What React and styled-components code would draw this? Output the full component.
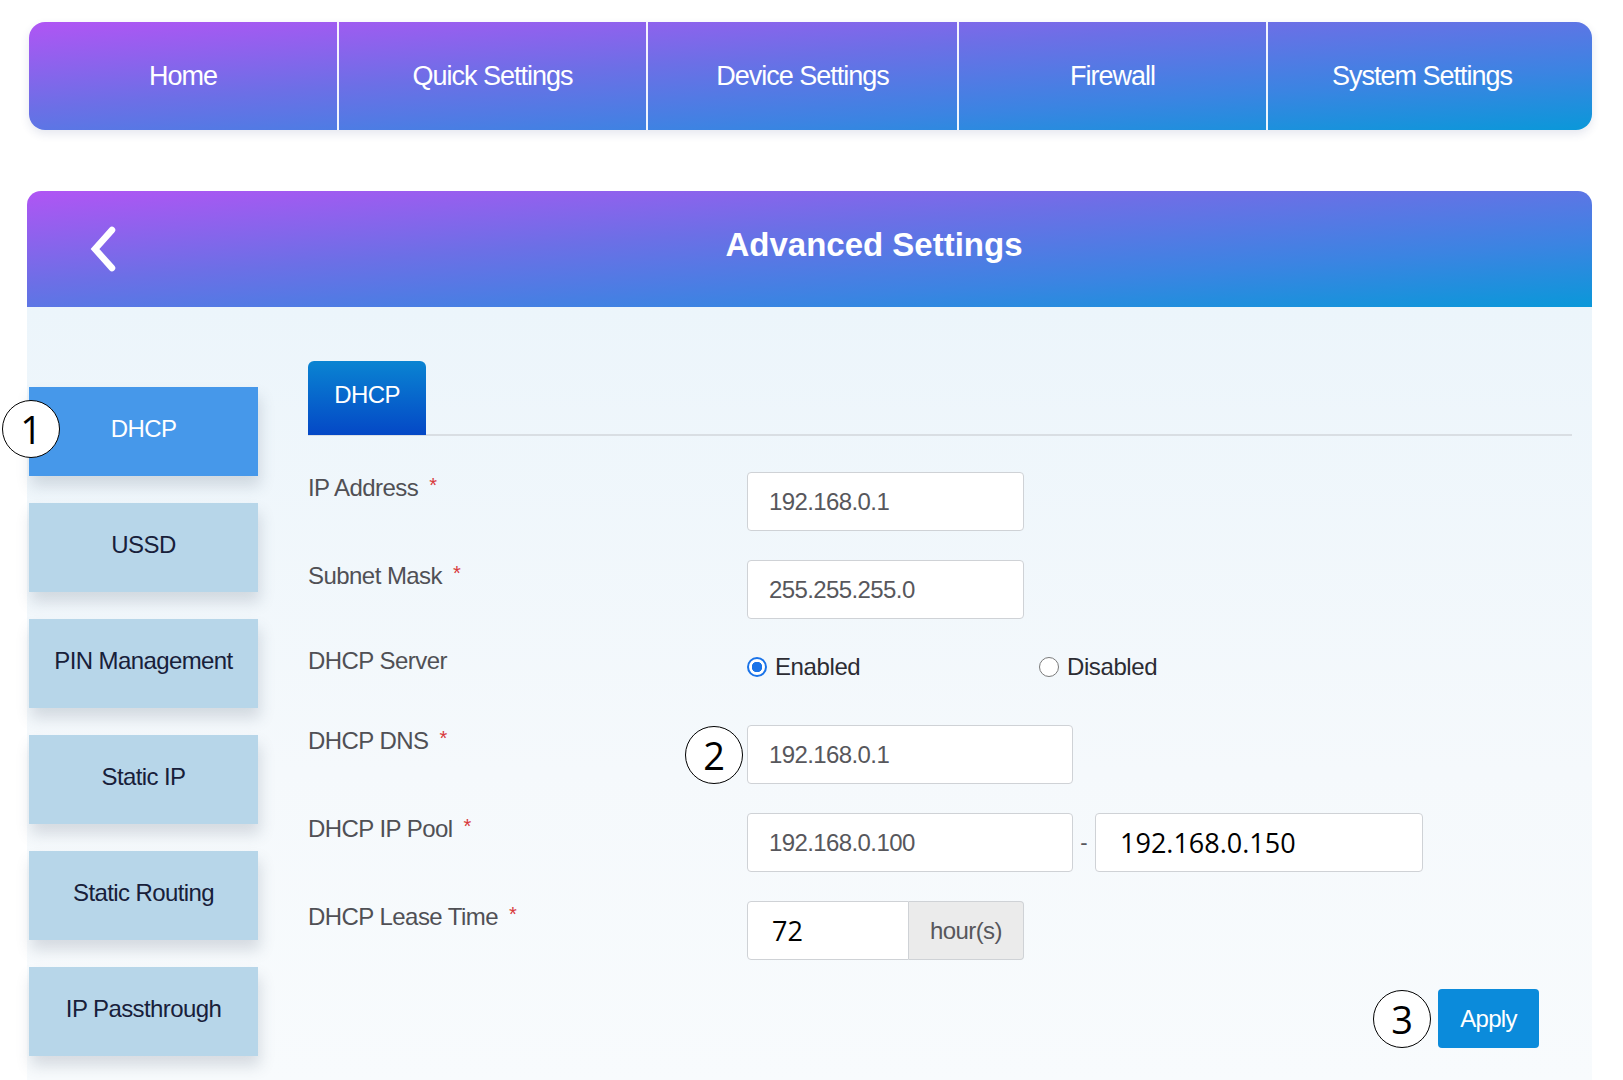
import React from "react";
import styled, { createGlobalStyle } from "styled-components";

const GlobalStyle = createGlobalStyle`
  body {
    margin: 0;
    background: #ffffff;
    font-family: "Liberation Sans", Arial, sans-serif;
  }
`;

const brandGradient = "linear-gradient(to bottom right, #b055f4 0%, #6c6fe6 40%, #3b84e2 72%, #0a98d9 100%)";

const navItems = ["Home", "Quick Settings", "Device Settings", "Firewall", "System Settings"];
const sideItems = ["DHCP", "USSD", "PIN Management", "Static IP", "Static Routing", "IP Passthrough"];

const Page = styled.div`
  padding: 22px 31px 0 27px;
`;

const TopNav = styled.nav`
  margin-left: 2px;
  height: 108px;
  display: grid;
  grid-template-columns: 308px 309px 311px 309px 1fr;
  padding-right: 16px;
  background: ${brandGradient};
  border-radius: 16px;
  overflow: hidden;
  box-shadow: 0 4px 10px rgba(40, 60, 120, 0.12);
`;

const NavItem = styled.div`
  display: flex;
  align-items: center;
  justify-content: center;
  color: #ffffff;
  font-size: 27px;
  letter-spacing: -1px;
  border-left: ${(p) => (p.$first ? "none" : "2px solid rgba(255, 255, 255, 0.92)")};
`;

const Panel = styled.section`
  margin-top: 61px;
`;

const PanelHeader = styled.header`
  height: 116px;
  display: flex;
  align-items: center;
  background: ${brandGradient};
  border-radius: 14px 14px 0 0;
`;

const BackButton = styled.div`
  width: 129px;
  display: flex;
  align-items: center;
  padding-left: 61px;
  box-sizing: border-box;
`;

const Title = styled.h1`
  flex: 1;
  margin: 0;
  text-align: center;
  color: #ffffff;
  font-size: 33px;
  font-weight: bold;
  letter-spacing: 0;
  padding-bottom: 8px;
`;

const PanelBody = styled.div`
  display: flex;
  padding: 54px 20px 20px 2px;
  min-height: 700px;
  background: linear-gradient(to bottom, #ecf5fb, #f5f9fc 60%, #f8fbfd);
`;

const Sidebar = styled.div`
  width: 229px;
  padding-top: 26px;
  display: flex;
  flex-direction: column;
  gap: 27px;
`;

const SideItem = styled.div`
  position: relative;
  height: 89px;
  box-sizing: border-box;
  padding-bottom: 5px;
  display: flex;
  align-items: center;
  justify-content: center;
  font-size: 24px;
  letter-spacing: -0.6px;
  color: ${(p) => (p.$active ? "#ffffff" : "#17203a")};
  background: ${(p) => (p.$active ? "#4698ea" : "#b7d6e9")};
  box-shadow: 2px 10px 14px rgba(60, 80, 100, 0.18);
`;

const Content = styled.div`
  flex: 1;
  margin-left: 50px;
`;

const TabBar = styled.div`
  display: flex;
  border-bottom: 2px solid #d9dee3;
`;

const Tab = styled.div`
  width: 118px;
  height: 74px;
  box-sizing: border-box;
  padding-bottom: 6px;
  display: flex;
  align-items: center;
  justify-content: center;
  color: #ffffff;
  font-size: 24px;
  letter-spacing: -0.6px;
  border-radius: 6px 6px 0 0;
  background: linear-gradient(to bottom, #0a84d2, #0448c6);
  margin-bottom: -1px;
`;

const Form = styled.div`
  padding-top: 36px;
`;

const Row = styled.div`
  display: flex;
  align-items: flex-start;
  margin-bottom: 29px;
  min-height: ${(p) => p.$h || 0}px;
`;

const Label = styled.div`
  width: 439px;
  flex: none;
  font-size: 24px;
  line-height: 26px;
  letter-spacing: -0.55px;
  color: #505055;
`;

const Required = styled.span`
  color: #d8383a;
  font-size: 20px;
  margin-left: 11px;
  vertical-align: 4px;
`;

const FieldWrap = styled.div`
  position: relative;
  display: flex;
  align-items: center;
`;

const Input = styled.div`
  width: ${(p) => p.$w}px;
  height: 59px;
  box-sizing: border-box;
  display: flex;
  align-items: center;
  padding-left: ${(p) => (p.$strong ? 24 : 21)}px;
  background: #ffffff;
  border: 1px solid #cfd2d6;
  border-radius: ${(p) => (p.$joined ? "4px 0 0 4px" : "4px")};
  font-size: ${(p) => (p.$strong ? "27px" : "24px")};
  font-family: ${(p) => (p.$strong ? '"Open Sans", "Noto Sans", sans-serif' : "inherit")};
  letter-spacing: ${(p) => (p.$strong ? "0" : "-0.6px")};
  color: ${(p) => (p.$strong ? "#000000" : "#57575c")};
`;

const Addon = styled.div`
  width: 115px;
  height: 59px;
  box-sizing: border-box;
  display: flex;
  align-items: center;
  justify-content: center;
  background: #ebebeb;
  border: 1px solid #cfd2d6;
  border-left: none;
  border-radius: 0 4px 4px 0;
  font-size: 24px;
  letter-spacing: -0.6px;
  color: #57575c;
`;

const Dash = styled.span`
  width: 22px;
  text-align: center;
  font-size: 22px;
  color: #57575c;
`;

const RadioGroup = styled.div`
  display: flex;
  align-items: center;
  height: 38px;
`;

const RadioOption = styled.label`
  width: ${(p) => p.$w}px;
  display: flex;
  align-items: center;
  gap: 8px;
  font-size: 24px;
  letter-spacing: -0.4px;
  color: #2c2c33;
`;

const RadioDot = styled.span`
  width: 20px;
  height: 20px;
  box-sizing: border-box;
  border-radius: 50%;
  border: ${(p) => (p.$checked ? "2px solid #1a73e8" : "1.5px solid #7a7a7a")};
  background: ${(p) => (p.$checked ? "radial-gradient(circle, #1a73e8 0 5px, #ffffff 5.5px)" : "#ffffff")};
`;

const ApplyRow = styled.div`
  display: flex;
  justify-content: flex-end;
  padding-right: 33px;
  margin-top: 29px;
`;

const ApplyButton = styled.button`
  position: relative;
  width: 101px;
  height: 59px;
  border: none;
  border-radius: 4px;
  background: #0b8bdb;
  color: #ffffff;
  font-family: "Liberation Sans", Arial, sans-serif;
  font-size: 24px;
  letter-spacing: -0.7px;
`;

const Marker = styled.span`
  position: absolute;
  top: calc(50% + ${(p) => p.$dy || 0}px);
  left: ${(p) => p.$left}px;
  transform: translateY(-50%);
  width: 58px;
  height: 58px;
  box-sizing: border-box;
  border-radius: 50%;
  border: 1.5px solid #000000;
  background: #ffffff;
  display: flex;
  align-items: center;
  justify-content: center;
  font-family: "Open Sans", "Noto Sans", sans-serif;
  font-size: 38px;
  color: #000000;
  letter-spacing: 0;
  z-index: 2;
`;

const BackArrow = () => (
  <svg width="30" height="46" viewBox="0 0 30 46">
    <polyline
      points="24,4 7,23 24,42"
      fill="none"
      stroke="#ffffff"
      strokeWidth="6.5"
      strokeLinecap="round"
      strokeLinejoin="miter"
    />
  </svg>
);

const FormRow = ({ label, required, children, h }) => (
  <Row $h={h}>
    <Label>
      {label}
      {required && <Required>*</Required>}
    </Label>
    {children}
  </Row>
);

export default function App() {
  return (
    <Page>
      <GlobalStyle />
      <TopNav>
        {navItems.map((item, i) => (
          <NavItem key={item} $first={i === 0}>
            {item}
          </NavItem>
        ))}
      </TopNav>

      <Panel>
        <PanelHeader>
          <BackButton>
            <BackArrow />
          </BackButton>
          <Title>Advanced Settings</Title>
        </PanelHeader>

        <PanelBody>
          <Sidebar>
            {sideItems.map((item, i) => (
              <SideItem key={item} $active={i === 0}>
                {i === 0 && (
                  <Marker $left={-27} $dy={-3}>
                    1
                  </Marker>
                )}
                {item}
              </SideItem>
            ))}
          </Sidebar>

          <Content>
            <TabBar>
              <Tab>DHCP</Tab>
            </TabBar>

            <Form>
              <FormRow label="IP Address" required>
                <Input $w={277}>192.168.0.1</Input>
              </FormRow>
              <FormRow label="Subnet Mask" required>
                <Input $w={277}>255.255.255.0</Input>
              </FormRow>
              <FormRow label="DHCP Server" h={48}>
                <RadioGroup>
                  <RadioOption $w={292}>
                    <RadioDot $checked />
                    Enabled
                  </RadioOption>
                  <RadioOption $w={200}>
                    <RadioDot />
                    Disabled
                  </RadioOption>
                </RadioGroup>
              </FormRow>
              <FormRow label="DHCP DNS" required>
                <FieldWrap>
                  <Marker $left={-62}>2</Marker>
                  <Input $w={326}>192.168.0.1</Input>
                </FieldWrap>
              </FormRow>
              <FormRow label="DHCP IP Pool" required>
                <FieldWrap>
                  <Input $w={326}>192.168.0.100</Input>
                  <Dash>-</Dash>
                  <Input $w={328} $strong>
                    192.168.0.150
                  </Input>
                </FieldWrap>
              </FormRow>
              <FormRow label="DHCP Lease Time" required>
                <FieldWrap>
                  <Input $w={162} $strong $joined>
                    72
                  </Input>
                  <Addon>hour(s)</Addon>
                </FieldWrap>
              </FormRow>
            </Form>

            <ApplyRow>
              <ApplyButton>
                <Marker $left={-65}>3</Marker>
                Apply
              </ApplyButton>
            </ApplyRow>
          </Content>
        </PanelBody>
      </Panel>
    </Page>
  );
}
